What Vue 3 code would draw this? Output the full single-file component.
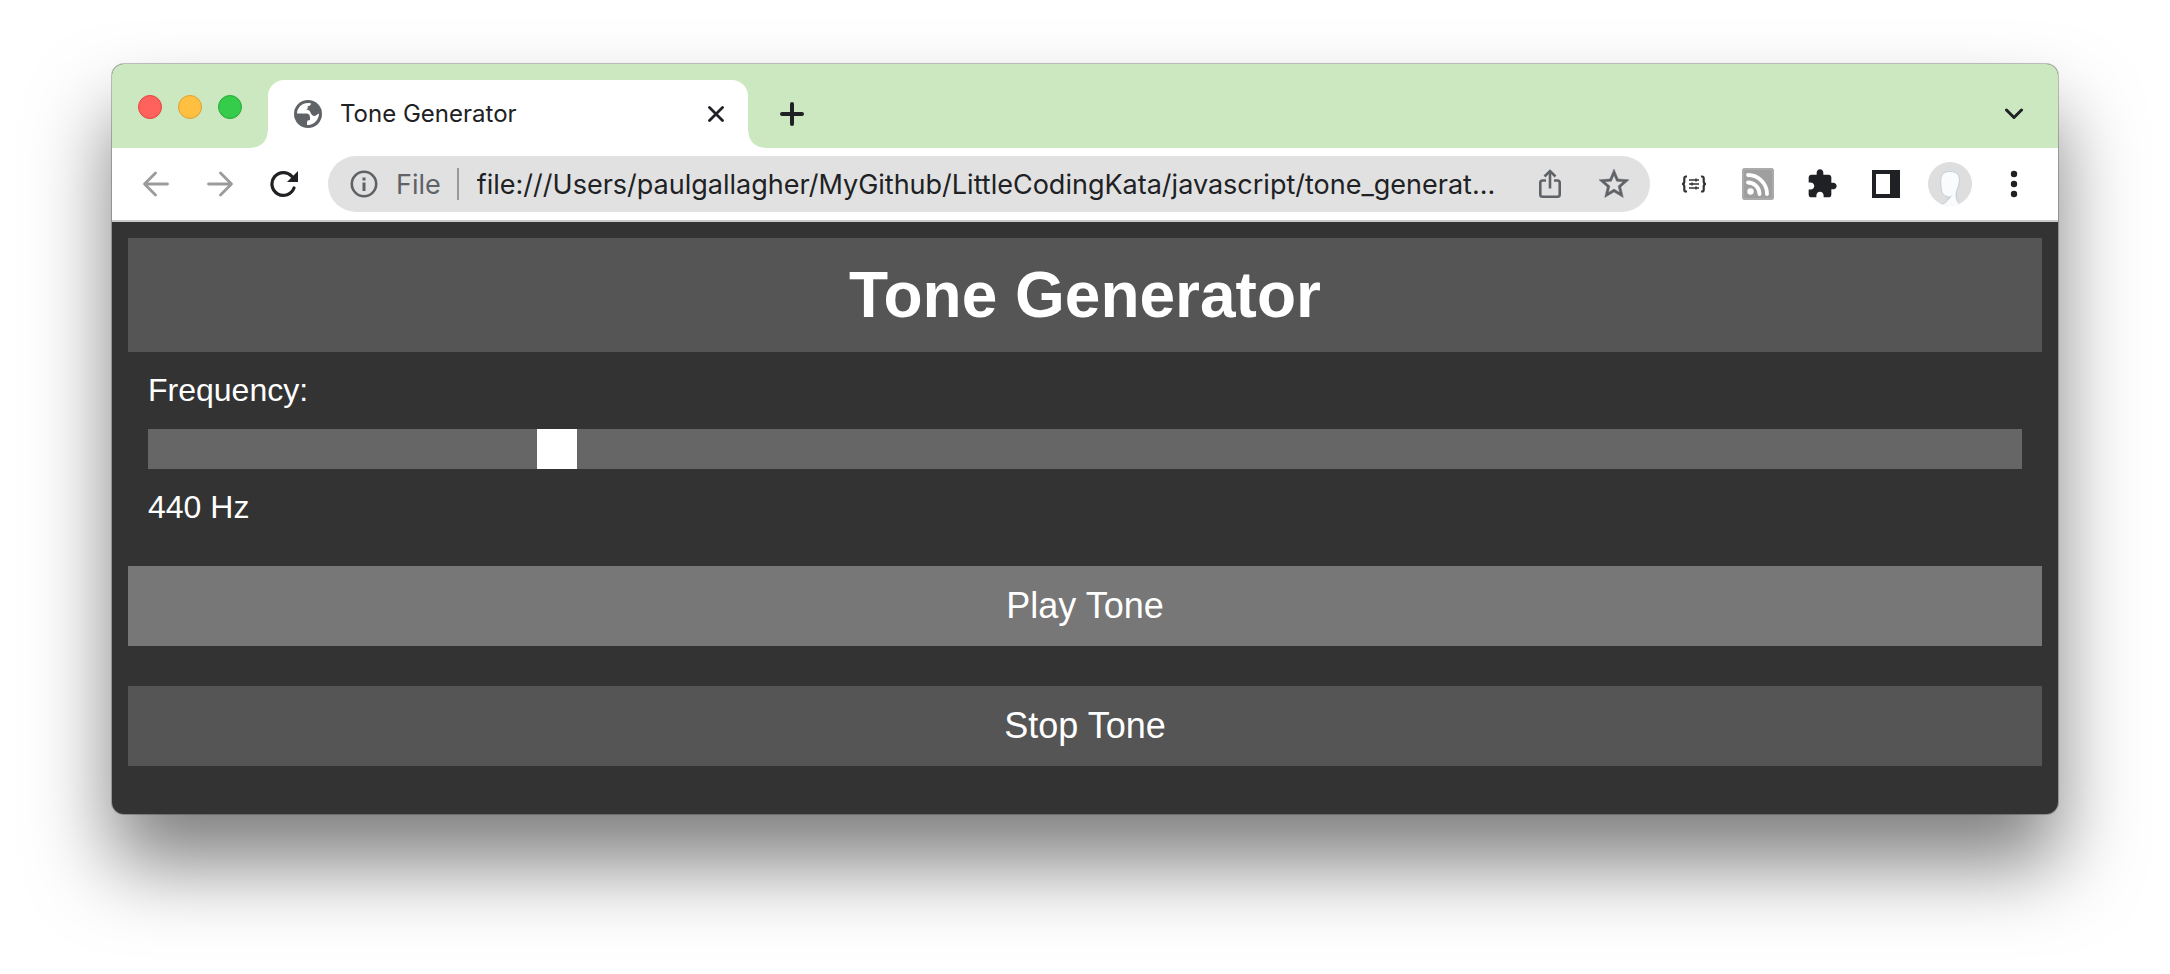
<script setup>
import { ref } from 'vue'

const frequency = ref(440)
const address = ref('file:///Users/paulgallagher/MyGithub/LittleCodingKata/javascript/tone_generat...')
const lights = [
  { name: 'Close window', kind: 'red' },
  { name: 'Minimise window', kind: 'amber' },
  { name: 'Zoom window', kind: 'green' },
]
</script>

<template>
  <div class="desktop">
    <section class="window">
      <header class="tabstrip">
        <div class="lights">
          <button v-for="light in lights" :key="light.kind" type="button" class="light" :class="light.kind" :aria-label="light.name"></button>
        </div>
        <div class="tab">
          <svg class="globe" viewBox="0 0 28 28" aria-hidden="true">
            <circle cx="14" cy="14" r="14" fill="#5f6368" />
            <path fill="#fff" d="M3 13.600C3 7.500 8 2.900 14 2.900L17 3.300C17 5.300 15.700 6.300 13.700 6.300V8.300C13.700 9.500 12.800 10 11.500 10H9.500V13.600Z" />
            <path fill="#fff" d="M25 13.500C25 19.500 20 25 14 25H13V22.500C13 20.800 14 20 16 20V17.500C16 15 14.500 13.600 12.500 13.600H9V10H14C15.500 10 16.300 12 17 13.500C18 16 20 16.300 22 15.500C23 14.500 24 14 25 13.500Z" />
          </svg>
          <span class="tab-title">Tone Generator</span>
          <button type="button" class="tab-close" aria-label="Close tab">
            <svg width="16" height="16" viewBox="0 0 16 16"><path d="M1.500 1.500L14.500 14.500M14.500 1.500L1.500 14.500" fill="none" stroke="#202124" stroke-width="2.800" stroke-linecap="round" /></svg>
          </button>
        </div>
        <button type="button" class="new-tab" aria-label="New tab">
          <svg width="24" height="24" viewBox="0 0 24 24"><path d="M12 2V22M2 12H22" fill="none" stroke="#202124" stroke-width="4" stroke-linecap="round" /></svg>
        </button>
        <button type="button" class="tool tab-search" aria-label="Search tabs">
          <svg width="18" height="12" viewBox="0 0 18 12"><path d="M1.500 2L9 9.500L16.500 2" fill="none" stroke="#202124" stroke-width="3" stroke-linecap="round" stroke-linejoin="round" /></svg>
        </button>
      </header>

      <nav class="toolbar">
        <button type="button" class="tool" aria-label="Back">
          <svg width="28" height="28" viewBox="0 0 28 28"><path d="M25.500 14H2.500M13.500 3L2.500 14L13.500 25" fill="none" stroke="#9b9b9b" stroke-width="2.800" stroke-linecap="round" stroke-linejoin="round" /></svg>
        </button>
        <button type="button" class="tool" aria-label="Forward">
          <svg width="28" height="28" viewBox="0 0 28 28"><path d="M2.500 14H25.500M14.500 3L25.500 14L14.500 25" fill="none" stroke="#9b9b9b" stroke-width="2.800" stroke-linecap="round" stroke-linejoin="round" /></svg>
        </button>
        <button type="button" class="tool" aria-label="Reload">
          <svg width="28" height="28" viewBox="0 0 28 28">
            <path d="M24 18A11.400 11.400 0 1 1 22 6.500" fill="none" stroke="#202124" stroke-width="3.200" stroke-linecap="round" />
            <path d="M28 1V12H17Z" fill="#202124" />
          </svg>
        </button>

        <div class="omnibox">
          <svg class="info" width="28" height="28" viewBox="0 0 28 28" aria-hidden="true">
            <circle cx="14" cy="14" r="12.200" fill="none" stroke="#5f6368" stroke-width="2.600" />
            <path d="M12.500 12.500H15.500V21H12.500ZM12.500 7.500H15.500V10.500H12.500Z" fill="#5f6368" />
          </svg>
          <label class="scheme" for="address">File</label>
          <span class="divider"></span>
          <input id="address" v-model="address" class="address" type="text" spellcheck="false" />
          <button type="button" class="tool" aria-label="Share">
            <svg width="24" height="30" viewBox="0 0 24 30" fill="none" stroke="#5f6368" stroke-width="2.600">
              <path d="M8 11.500H4.500Q2.300 11.500 2.300 13.700V25.500Q2.300 27.700 4.500 27.700H19.500Q21.700 27.700 21.700 25.500V13.700Q21.700 11.500 19.500 11.500H16" />
              <path d="M12 19.500V3" />
              <path d="M6.500 7.500L12 2L17.500 7.500" />
            </svg>
          </button>
          <button type="button" class="tool" aria-label="Bookmark this page">
            <svg width="36" height="36" viewBox="0 0 24 24"><path fill="#5f6368" stroke="#5f6368" stroke-width=".3" d="M22 9.240l-7.190-.620L12 2 9.190 8.630 2 9.240l5.460 4.730L5.820 21 12 17.270 18.180 21l-1.630-7.030L22 9.240zM12 15.400l-3.760 2.270 1-4.280-3.320-2.880 4.380-.380L12 6.100l1.710 4.040 4.380.380-3.320 2.880 1 4.280L12 15.400z" /></svg>
          </button>
        </div>

        <button type="button" class="tool" aria-label="JSON viewer">
          <svg width="26" height="18" viewBox="0 0 26 18" fill="none" stroke="#333">
            <path d="M6 1.500H5Q3.300 1.500 3.300 3.300V6.500Q3.300 9 1 9Q3.300 9 3.300 11.500V14.700Q3.300 16.500 5 16.500H6M20 1.500H21Q22.700 1.500 22.700 3.300V6.500Q22.700 9 25 9Q22.700 9 22.700 11.500V14.700Q22.700 16.500 21 16.500H20" stroke-width="2.200" />
            <path d="M8 5H18M8 9H18M8 13H18" stroke-width="1.500" />
            <path d="M15 3.500V6.500M11 7.500V10.500M15 11.500V14.500" stroke-width="1.600" />
          </svg>
        </button>
        <button type="button" class="tool" aria-label="RSS feed">
          <svg width="32" height="32" viewBox="0 0 32 32">
            <rect width="32" height="32" rx="3" fill="#9f9f9f" />
            <rect x="1" y="1" width="30" height="30" rx="3" fill="none" stroke="#ababab" stroke-width="2" />
            <circle cx="8.500" cy="23.500" r="3.200" fill="#fff" />
            <path d="M6 14.500A11.500 11.500 0 0 1 17.500 26M6 7A19 19 0 0 1 25 26" fill="none" stroke="#fff" stroke-width="3.800" stroke-linecap="round" />
          </svg>
        </button>
        <button type="button" class="tool" aria-label="Extensions">
          <svg width="32" height="32" viewBox="0 0 24 24"><path fill="#202124" d="M20.500 11H19V7c0-1.100-.900-2-2-2h-4V3.500C13 2.120 11.880 1 10.500 1S8 2.120 8 3.500V5H4c-1.100 0-1.990.900-1.990 2v3.800H3.500c1.490 0 2.700 1.210 2.700 2.700s-1.210 2.700-2.700 2.700H2V20c0 1.100.900 2 2 2h3.800v-1.500c0-1.490 1.210-2.700 2.700-2.700 1.490 0 2.700 1.210 2.700 2.700V22H17c1.100 0 2-.900 2-2v-4h1.500c1.380 0 2.500-1.120 2.500-2.500S21.880 11 20.500 11z" /></svg>
        </button>
        <button type="button" class="tool" aria-label="Side panel">
          <svg width="28" height="28" viewBox="0 0 28 28"><path fill="#202124" fill-rule="evenodd" d="M0 0H28V28H0ZM4 4V24H18V4Z" /></svg>
        </button>
        <button type="button" class="tool" aria-label="Profile">
          <svg width="44" height="44" viewBox="0 0 44 44">
            <clipPath id="avatar-clip"><circle cx="22" cy="22" r="22" /></clipPath>
            <g clip-path="url(#avatar-clip)">
              <rect width="44" height="44" fill="#dedede" />
              <path d="M12.800 22C12.300 13.500 14.500 9.500 22 9.500C29.500 9.500 32 13.500 31.300 20C30.800 25 28 28 28 33C28 37.500 29.500 40 32 42.500V46H12V42.500C17 42 20 40 19.500 34.500C14.500 33.500 13.200 30 12.800 22Z" fill="#f9fbfd" stroke="#c3ced8" />
              <path d="M19.500 34.500C22 34.800 24 33.500 25.500 31.500L20.500 38.500Z" fill="#ccd6de" />
            </g>
          </svg>
        </button>
        <button type="button" class="tool" aria-label="Menu">
          <svg width="8" height="28" viewBox="0 0 8 28" fill="#202124"><circle cx="4" cy="4" r="3.200" /><circle cx="4" cy="14" r="3.200" /><circle cx="4" cy="24" r="3.200" /></svg>
        </button>
      </nav>

      <main class="page">
        <h1 class="heading">Tone Generator</h1>
        <div class="control">
          <label for="frequency">Frequency:</label>
          <input id="frequency" v-model="frequency" class="slider" type="range" min="20" max="2000" />
          <output for="frequency">{{ frequency }} Hz</output>
        </div>
        <div class="actions">
          <button type="button" class="action play">Play Tone</button>
          <button type="button" class="action">Stop Tone</button>
        </div>
      </main>
    </section>
  </div>
</template>

<style>
body {
  margin: 0;
  background: #fff;
}
</style>

<style scoped>
.desktop {
  box-sizing: border-box;
  min-height: 100vh;
  padding: 64px 112px 160px;
  overflow: hidden;
  background: #fff;
}

button {
  margin: 0;
  padding: 0;
  border: 0;
  background: none;
  cursor: pointer;
}

svg {
  display: block;
  flex: none;
}

.window {
  border-radius: 12px;
  background: #333;
  box-shadow:
    0 0 0 1px rgba(0, 0, 0, 0.24),
    0 50px 80px rgba(0, 0, 0, 0.5);
  font-family: Inter, "Liberation Sans", sans-serif;
}

.tabstrip {
  display: flex;
  align-items: flex-end;
  height: 84px;
  border-radius: 12px 12px 0 0;
  background: #cce8c0;
}

.lights {
  display: flex;
  align-items: center;
  align-self: stretch;
  gap: 16px;
  width: 130px;
  padding: 2px 0 0 26px;
}

.light {
  width: 24px;
  height: 24px;
  border: 1px solid #e0443e;
  border-radius: 50%;
  background: #ff625c;
}

.amber {
  border-color: #dea035;
  background: #ffbf41;
}

.green {
  border-color: #27aa35;
  background: #35cb4b;
}

.tab {
  position: relative;
  display: flex;
  align-items: center;
  box-sizing: border-box;
  width: 480px;
  height: 68px;
  padding: 0 24px 0 26px;
  border-radius: 16px 16px 0 0;
  background: #fff;
}

.tab::before,
.tab::after {
  content: "";
  position: absolute;
  bottom: 0;
  width: 16px;
  height: 16px;
}

.tab::before {
  right: 100%;
  background: radial-gradient(circle at 0 0, transparent 15px, #fff 16px);
}

.tab::after {
  left: 100%;
  background: radial-gradient(circle at 100% 0, transparent 15px, #fff 16px);
}

.globe {
  width: 28px;
  height: 28px;
}

.tab-title {
  flex: 1;
  padding-left: 18px;
  color: #202124;
  font-size: 24px;
  line-height: 32px;
}

.new-tab,
.tab-close {
  display: flex;
  align-items: center;
  justify-content: center;
}

.new-tab {
  width: 56px;
  height: 68px;
  margin-left: 16px;
}

.tool {
  display: flex;
  flex: none;
  align-items: center;
  justify-content: center;
  width: 64px;
  height: 56px;
}

.tab-search {
  height: 68px;
  margin-left: auto;
  margin-right: 12px;
}

.toolbar {
  display: flex;
  align-items: center;
  height: 72px;
  padding: 0 12px;
  border-bottom: 2px solid #cacaca;
  background: #fff;
}

.omnibox {
  display: flex;
  flex: 1;
  align-items: center;
  min-width: 0;
  height: 56px;
  margin: 0 12px;
  padding: 0 4px 0 22px;
  box-sizing: border-box;
  border-radius: 28px;
  background: #e1e1e1;
  font-size: 27px;
}

.scheme {
  padding-left: 18px;
  color: #5f6368;
}

.divider {
  width: 2px;
  height: 32px;
  margin: 0 18px 0 16px;
  background: #999;
}

.address {
  flex: 1;
  min-width: 0;
  padding: 0;
  border: 0;
  outline: 0;
  background: none;
  color: #202124;
  font: inherit;
}

.page {
  padding: 16px 16px 48px;
  color: #fff;
  font-family: "Liberation Sans", Arial, sans-serif;
}

.heading {
  margin: 0;
  padding: 20px;
  background: #555;
  font-size: 64px;
  line-height: 74px;
  text-align: center;
}

.control {
  display: flex;
  flex-direction: column;
  gap: 20px;
  padding: 20px;
  font-size: 32px;
  line-height: 37px;
}

.slider {
  width: 100%;
  height: 40px;
  margin: 0;
  appearance: none;
  background: #666;
}

.slider::-webkit-slider-thumb {
  width: 40px;
  height: 40px;
  appearance: none;
  background: #fff;
}

.actions {
  display: flex;
  flex-direction: column;
  gap: 40px;
  margin-top: 20px;
}

.action {
  height: 80px;
  background: #555;
  color: #fff;
  font-family: inherit;
  font-size: 36px;
}

.play {
  background: #777;
}
</style>
